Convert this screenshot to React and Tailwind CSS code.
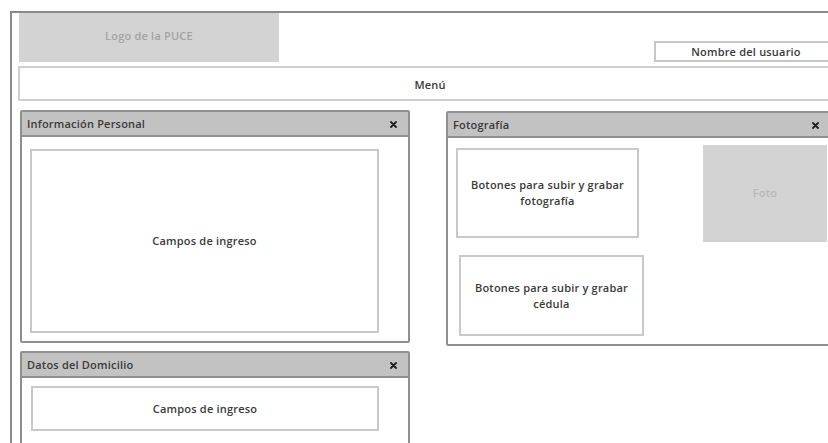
import React from "react";

const font = { fontFamily: '"Open Sans", "DejaVu Sans", sans-serif' };

function Close() {
  return (
    <svg width="7" height="7" viewBox="0 0 7 7" className="shrink-0">
      <path d="M1 1 L6 6 M6 1 L1 6" stroke="#1f1f1f" strokeWidth="1.8" strokeLinecap="round" />
    </svg>
  );
}

function Panel({ title, className = "", closeRight = "pr-[11px]", children }) {
  return (
    <div className={`border-2 border-[#8f8f8f] rounded-[2px] bg-white flex flex-col ${className}`}>
      <div className={`h-[25px] shrink-0 bg-[#c2c2c2] border-b-2 border-[#8f8f8f] flex items-center justify-between pl-[5px] pt-[1px] ${closeRight}`}>
        <span className="text-[11px] font-semibold text-[#3a3a3a] tracking-[0.2px]">{title}</span>
        <Close />
      </div>
      {children}
    </div>
  );
}

function Box({ className = "", children }) {
  return (
    <div className={`border-2 border-[#c9c9c9] flex items-center justify-center text-center text-[11px] font-semibold leading-[16px] text-[#3a3a3a] tracking-[0.2px] ${className}`}>
      {children}
    </div>
  );
}

export default function App() {
  return (
    <div className="w-[828px] h-[443px] overflow-hidden bg-white pt-[11px] pl-[10px]" style={font}>
      <div className="w-[832px] h-[440px] border-l-2 border-t-2 border-[#8a8a8a] flex flex-col">
        {/* header row: logo and user name */}
        <div className="flex items-end h-[49px]">
          <div className="ml-[7px] w-[260px] h-[49px] bg-[#d3d3d3] flex items-center justify-center pb-[2px]">
            <span className="text-[11px] font-semibold text-[#a3a3a3] tracking-[0.2px]">Logo de la PUCE</span>
          </div>
          <div className="ml-[375px] w-[184px] h-[21px] border-2 border-[#c6c6c6] flex items-center justify-center pt-[1px]">
            <span className="text-[11px] font-semibold text-[#3a3a3a] tracking-[0.2px]">Nombre del usuario</span>
          </div>
        </div>

        {/* menu bar */}
        <div className="mt-[4px] ml-[6px] h-[38px] border-2 border-[#cfcfcf] flex items-center justify-center pt-[3px]">
          <span className="text-[11px] font-semibold text-[#3a3a3a] tracking-[0.2px]">Menú</span>
        </div>

        {/* panels */}
        <div className="flex mt-[9px]">
          <div className="ml-[8px] w-[390px] flex flex-col gap-[8px]">
            <Panel title="Información Personal" className="h-[233px]">
              <div className="flex-1 pt-[12px] pl-[8px] pr-[29px] pb-[8px] flex">
                <Box className="flex-1">Campos de ingreso</Box>
              </div>
            </Panel>
            <Panel title="Datos del Domicilio" className="h-[100px]">
              <div className="pt-[8px] pl-[9px] pr-[29px]">
                <Box className="h-[45px]">Campos de ingreso</Box>
              </div>
            </Panel>
          </div>

          <Panel title="Fotografía" className="ml-[36px] mt-[1px] w-[388px] h-[235px]" closeRight="pr-[13px]">
            <div className="flex-1">
              <div className="flex items-start pl-[8px] pt-[10px]">
                <Box className="w-[183px] h-[90px]">
                  Botones para subir y grabar
                  <br />
                  fotografía
                </Box>
                <div className="ml-[64px] mt-[-3px] w-[124px] h-[97px] bg-[#d3d3d3] flex items-center justify-center">
                  <span className="text-[11px] font-semibold text-[#b8b8b8] tracking-[0.2px]">Foto</span>
                </div>
              </div>
              <div className="pl-[11px] mt-[13px]">
                <Box className="w-[185px] h-[81px]">
                  Botones para subir y grabar
                  <br />
                  cédula
                </Box>
              </div>
            </div>
          </Panel>
        </div>
      </div>
    </div>
  );
}
